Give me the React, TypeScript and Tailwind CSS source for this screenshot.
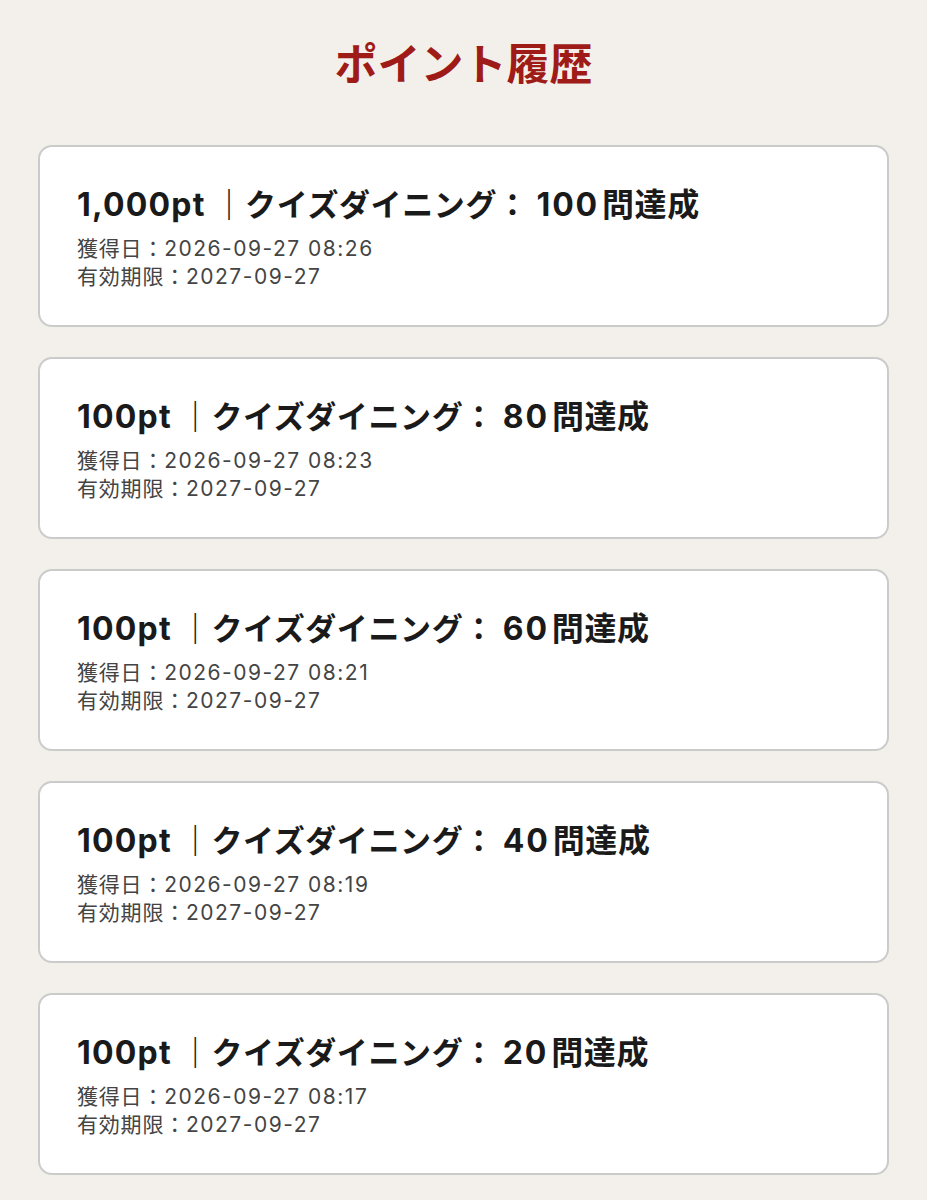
const items = [
  { pt: '1,000pt', count: 100, at: '2026-09-27 08:26' },
  { pt: '100pt', count: 80, at: '2026-09-27 08:23' },
  { pt: '100pt', count: 60, at: '2026-09-27 08:21' },
  { pt: '100pt', count: 40, at: '2026-09-27 08:19' },
  { pt: '100pt', count: 20, at: '2026-09-27 08:17' },
];

export default function App() {
  return (
    <div
      className="min-h-[1200px] bg-[#f3f0ec] px-[38px] pt-[35px] pb-10"
      style={{ fontFamily: 'Inter, "Noto Sans CJK JP", "Noto Sans", sans-serif' }}
    >
      <h1
        className="text-center text-[43px] leading-[52px] font-bold text-[#9e1b17]"
        style={{ fontFamily: '"Noto Sans CJK JP", sans-serif' }}
      >
        ポイント履歴
      </h1>
      <div className="mt-[58px] flex flex-col gap-[30px]">
        {items.map((item) => (
          <div
            key={item.at}
            className="h-[182px] rounded-[14px] border-2 border-[#cbcbcb] bg-white px-[37px] pt-[38px]"
          >
            <p className="text-[31px] leading-[40px] font-bold tracking-[0.6px] text-[#1a1a1a]">
              <span className="text-[32px] tracking-[1.2px]">{item.pt}</span> ｜クイズダイニング：
              <span className="ml-[8px] text-[32px] tracking-[1.8px]">{item.count}</span>
              <span className="ml-[3px] text-[32px] tracking-[0.6px]">問達成</span>
            </p>
            <p className="mt-[10px] text-[21px] leading-[28px] tracking-[0.8px] text-[#444]">
              獲得日：<span className="tracking-[1.5px]">{item.at}</span>
            </p>
            <p className="text-[21px] leading-[28px] tracking-[0.8px] text-[#444]">
              有効期限：<span className="tracking-[1.5px]">2027-09-27</span>
            </p>
          </div>
        ))}
      </div>
    </div>
  );
}
